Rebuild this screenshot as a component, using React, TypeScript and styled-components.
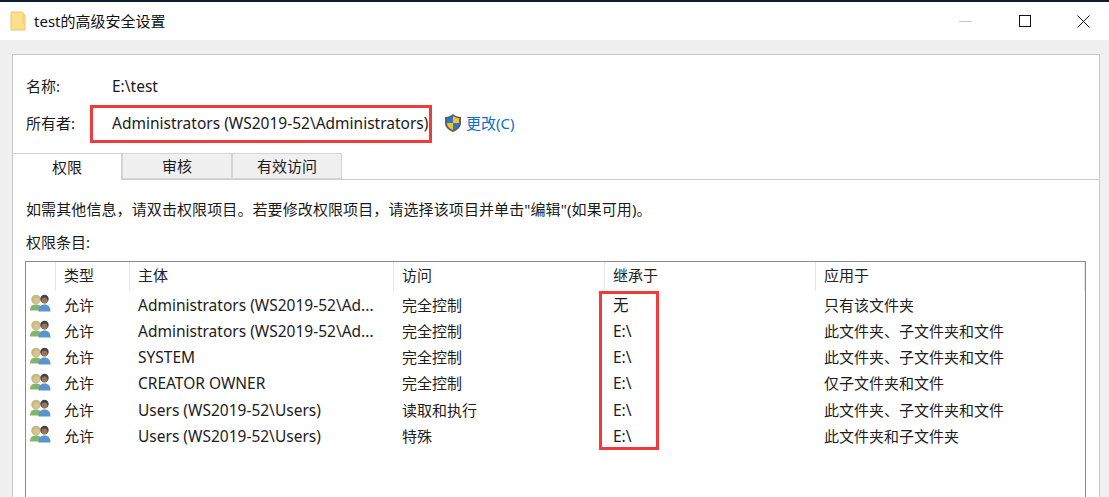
import React from "react";
import styled, { createGlobalStyle } from "styled-components";

const GlobalStyle = createGlobalStyle`
  html, body {
    margin: 0;
    padding: 0;
    background: #f0f0f0;
    overflow: hidden;
  }
  body {
    font-family: "Noto Sans", "Noto Sans CJK SC", sans-serif;
    font-size: 15px;
    color: #1a1a1a;
  }
`;

const Window = styled.div`
  width: 1109px;
  height: 497px;
  overflow: hidden;
  border-top: 2px solid #0e1c33;
  box-sizing: border-box;
  background: #f0f0f0;
`;

const TitleBar = styled.div`
  height: 38px;
  background: #fff;
  display: flex;
  align-items: center;
  padding-left: 10px;
  margin-right: -4px;
`;

const TitleText = styled.span`
  margin: 0 0 2px 7px;
  font-size: 15px;
  color: #111;
  flex: 1;
`;

const WindowButton = styled.div`
  width: 59px;
  height: 38px;
  display: flex;
  align-items: center;
  justify-content: center;
`;

const Panel = styled.div`
  margin: 14px 0 0 12px;
  width: 1088px;
  height: 460px;
  box-sizing: border-box;
  background: #fff;
  border: 1px solid #c8c8c8;
  border-bottom: none;
  padding-top: 13px;
`;

const InfoRow = styled.div`
  display: flex;
  align-items: center;
  height: 37px;
  padding-left: 13px;
`;

const InfoLabel = styled.span`
  width: 86px;
  flex: none;
  margin-bottom: 2px;
`;

const InfoValue = styled.span`
  font-size: 15.5px;
  margin-bottom: 2px;
`;

const OwnerBox = styled.div`
  margin-left: -22px;
  width: 342px;
  height: 38px;
  box-sizing: border-box;
  border: 3px solid #f23a3a;
  display: flex;
  align-items: center;
  padding: 0 0 2px 19px;
  white-space: nowrap;
  font-size: 15.5px;
`;

const ChangeLink = styled.a`
  display: flex;
  align-items: center;
  margin: 0 0 2px 12px;
  gap: 4px;
  color: #0a6fd0;
`;

const TabStrip = styled.div`
  display: flex;
  margin-top: 11px;
  height: 26px;
  border-bottom: 1px solid #d0d0d0;
`;

const Tab = styled.div<{ $active?: boolean }>`
  width: ${(p) => (p.$active ? "109px" : "110px")};
  height: ${(p) => (p.$active ? "27px" : "26px")};
  box-sizing: border-box;
  padding-bottom: 2px;
  display: flex;
  align-items: center;
  justify-content: center;
  background: ${(p) => (p.$active ? "#fff" : "#f0f0f0")};
  border: 1px solid #d4d4d4;
  border-left: ${(p) => (p.$active ? "none" : "1px solid #d4d4d4")};
  border-bottom: ${(p) => (p.$active ? "none" : "1px solid #d4d4d4")};
  position: relative;
  z-index: ${(p) => (p.$active ? 1 : 0)};
`;

const Hint = styled.div`
  margin: 19px 0 0 13px;
  height: 21px;
  line-height: 21px;
  letter-spacing: 0.1px;
`;

const ListLabel = styled.div`
  margin: 12px 0 0 13px;
  height: 21px;
  line-height: 21px;
`;

const ListBox = styled.div`
  position: relative;
  margin: 8px 0 0 12px;
  width: 1061px;
  height: 240px;
  box-sizing: border-box;
  border: 1px solid #8a8a8a;
  border-bottom: none;
`;

const columns = "30px 74px 264px 211px 211px 1fr";

const Header = styled.div`
  display: grid;
  grid-template-columns: ${columns};
  height: 29px;
`;

const HeaderCell = styled.div`
  border-right: 1px solid #e6e6e6;
  padding-left: 8px;
  line-height: 26px;
  color: #222;
`;

const Row = styled.div`
  display: grid;
  grid-template-columns: ${columns};
  height: 26.25px;
  align-items: center;
`;

const Cell = styled.div<{ $latin?: boolean }>`
  padding: ${(p) => (p.$latin ? "1px 0 0 8px" : "0 0 0 8px")};
  white-space: nowrap;
  overflow: hidden;
  color: #1c1c1c;
  font-size: ${(p) => (p.$latin ? "15.5px" : "15px")};
`;

const IconCell = styled.div`
  padding: 0 0 2px 4px;
  display: flex;
  align-items: center;
`;

const InheritMark = styled.div`
  position: absolute;
  left: 573px;
  top: 29px;
  width: 60px;
  height: 159px;
  box-sizing: border-box;
  border: 3px solid #f23a3a;
`;

const FolderIcon = () => (
  <svg width="17" height="20" viewBox="0 0 17 20">
    <path d="M1 1h11l3 3v15H1z" fill="#fbe08a" stroke="#e9c765" />
    <path d="M12 1v12h3V4z" fill="#f7d675" />
  </svg>
);

const Shield = () => (
  <svg width="18" height="20" viewBox="0 0 18 20">
    <path d="M9 1c2 2 5 3 8 3v6c0 4-3 7-8 9-5-2-8-5-8-9V4c3 0 6-1 8-3z" fill="#55606a" />
    <path d="M9 3C7.500 4.200 5 5 3 5.200V10h6z" fill="#2b78c9" />
    <path d="M9 3c1.500 1.200 4 2 6 2.200V10H9z" fill="#f6c02e" />
    <path d="M3 10h6v7c-3.500-1.300-6-3.800-6-7z" fill="#f6c02e" />
    <path d="M9 10h6c0 3.200-2.500 5.700-6 7z" fill="#2b78c9" />
  </svg>
);

const UsersIcon = () => (
  <svg width="21" height="18" viewBox="0 0 21 18">
    <circle cx="6" cy="5.500" r="4.800" fill="#c4bb7e" />
    <circle cx="6.500" cy="6.500" r="3" fill="#dcc096" />
    <path d="M0 16.500c0-4 2.200-6 6-6s6 2 6 6z" fill="#7fb56c" />
    <circle cx="14.500" cy="5" r="4.200" fill="#3f444c" />
    <circle cx="14.500" cy="6.500" r="3" fill="#9a7558" />
    <path d="M8.500 17.500c0-4.500 2.300-7 6-7s6 2.500 6 7z" fill="#5a93cd" />
  </svg>
);

const rows = [
  ["Administrators (WS2019-52\\Ad...", "完全控制", "无", "只有该文件夹"],
  ["Administrators (WS2019-52\\Ad...", "完全控制", "E:\\", "此文件夹、子文件夹和文件"],
  ["SYSTEM", "完全控制", "E:\\", "此文件夹、子文件夹和文件"],
  ["CREATOR OWNER", "完全控制", "E:\\", "仅子文件夹和文件"],
  ["Users (WS2019-52\\Users)", "读取和执行", "E:\\", "此文件夹、子文件夹和文件"],
  ["Users (WS2019-52\\Users)", "特殊", "E:\\", "此文件夹和子文件夹"],
];

export default function App() {
  return (
    <Window>
      <GlobalStyle />
      <TitleBar>
        <FolderIcon />
        <TitleText>test的高级安全设置</TitleText>
        <WindowButton>
          <svg width="13" height="13" viewBox="0 0 13 13">
            <path d="M0 6.500h13" stroke="#c8c8c8" />
          </svg>
        </WindowButton>
        <WindowButton>
          <svg width="12" height="12" viewBox="0 0 12 12">
            <rect x="0.500" y="0.500" width="11" height="11" fill="none" stroke="#111" />
          </svg>
        </WindowButton>
        <WindowButton>
          <svg width="13" height="13" viewBox="0 0 13 13">
            <path d="M.5.500l12 12M12.500.500l-12 12" stroke="#111" />
          </svg>
        </WindowButton>
      </TitleBar>
      <Panel>
        <InfoRow>
          <InfoLabel>名称:</InfoLabel>
          <InfoValue>E:\test</InfoValue>
        </InfoRow>
        <InfoRow>
          <InfoLabel>所有者:</InfoLabel>
          <OwnerBox>Administrators (WS2019-52\Administrators)</OwnerBox>
          <ChangeLink>
            <Shield />
            更改(C)
          </ChangeLink>
        </InfoRow>
        <TabStrip>
          <Tab $active>权限</Tab>
          <Tab>审核</Tab>
          <Tab>有效访问</Tab>
        </TabStrip>
        <Hint>如需其他信息，请双击权限项目。若要修改权限项目，请选择该项目并单击"编辑"(如果可用)。</Hint>
        <ListLabel>权限条目:</ListLabel>
        <ListBox>
          <Header>
            <HeaderCell />
            <HeaderCell>类型</HeaderCell>
            <HeaderCell>主体</HeaderCell>
            <HeaderCell>访问</HeaderCell>
            <HeaderCell>继承于</HeaderCell>
            <HeaderCell>应用于</HeaderCell>
          </Header>
          {rows.map((r, i) => (
            <Row key={i}>
              <IconCell>
                <UsersIcon />
              </IconCell>
              <Cell>允许</Cell>
              <Cell $latin>{r[0]}</Cell>
              <Cell>{r[1]}</Cell>
              <Cell $latin>{r[2]}</Cell>
              <Cell>{r[3]}</Cell>
            </Row>
          ))}
          <InheritMark />
        </ListBox>
      </Panel>
    </Window>
  );
}
